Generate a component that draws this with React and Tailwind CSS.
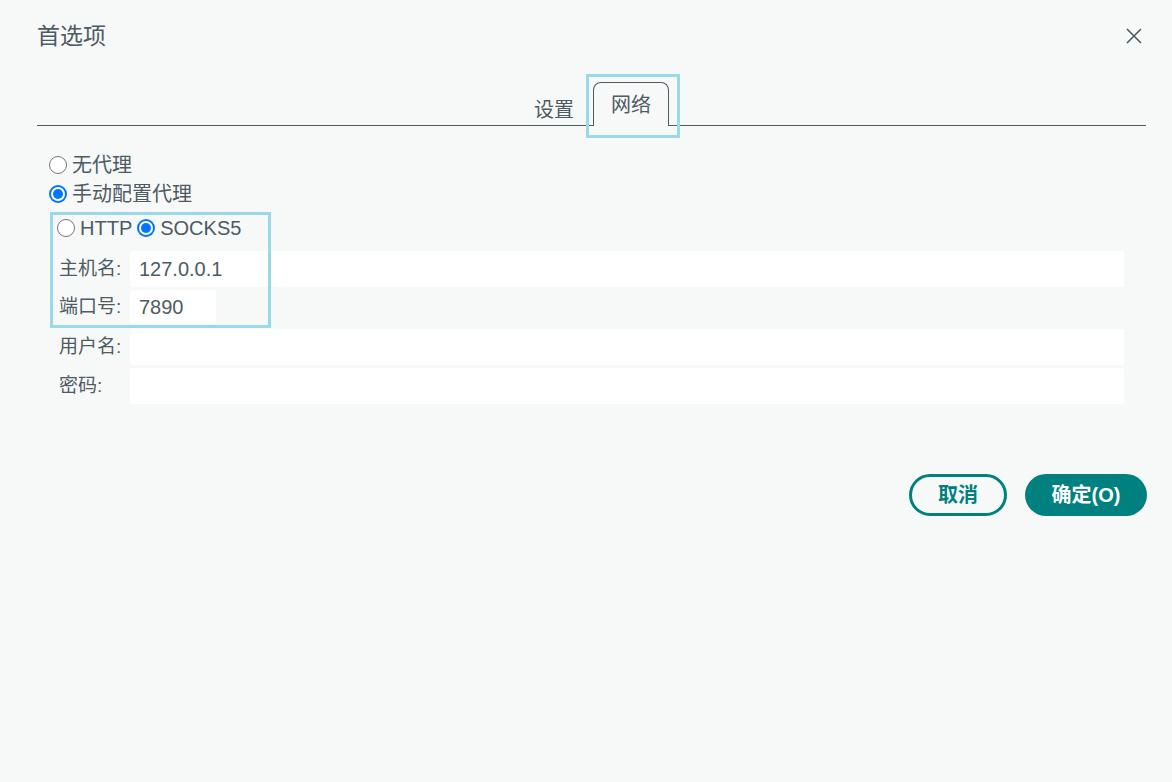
import React, { useState } from 'react';

const font = { fontFamily: '"Liberation Sans", "Noto Sans CJK SC", sans-serif' };

const Radio = ({ checked, label, onClick, className = '' }) => (
  <button type="button" onClick={onClick} className={`flex items-center gap-[5px] text-[20px] leading-[24px] text-[#4d5b63] ${className}`}>
    {checked ? (
      <span className="flex h-[18px] w-[18px] items-center justify-center rounded-full bg-[#0075ff]">
        <span className="flex h-[14px] w-[14px] items-center justify-center rounded-full bg-white">
          <span className="h-[10px] w-[10px] rounded-full bg-[#0075ff]" />
        </span>
      </span>
    ) : (
      <span className="h-[18px] w-[18px] rounded-full border-[1.5px] border-[#767676] bg-white" />
    )}
    <span>{label}</span>
  </button>
);

const Field = ({ label, value, inputClass = 'w-[994px] h-[36px]' }) => (
  <div className="flex items-center">
    <span className="w-[73px] pl-[2px] text-[19px] leading-[24px] text-[#4d5b63]">{label}</span>
    <div className={`flex items-center rounded-[3px] bg-white pl-[9px] text-[20px] leading-[24px] text-[#4d5b63] ${inputClass}`}>
      {value}
    </div>
  </div>
);

export default function App() {
  const [proxy, setProxy] = useState('manual');
  const [proto, setProto] = useState('socks5');

  return (
    <div className="h-[782px] w-[1172px] bg-[#f7f9f9]" style={font}>
      {/* header */}
      <div className="flex items-center justify-between pl-[37px] pr-[29px] pt-[19px]">
        <h1 className="text-[23px] leading-[34px] text-[#4d5b63]">首选项</h1>
        <svg width="18" height="18" viewBox="0 0 18 18" className="text-[#4d5b63]">
          <path d="M2 2L16 16M16 2L2 16" stroke="currentColor" strokeWidth="1.6" />
        </svg>
      </div>

      {/* tabs */}
      <div className="ml-[37px] mr-[26px] mt-[20px] flex h-[53px] items-end border-b border-[#4d5b63] pl-[497px]">
        <div className="mb-[5px] mr-[19px] text-[20px] leading-none text-[#4d5b63]">设置</div>
        <div className="relative -mb-px flex h-[44px] w-[76px] items-center justify-center rounded-t-[8px] border border-b-0 border-[#4d5b63] bg-[#f7f9f9] text-[20px] text-[#4d5b63]">
          网络
          <span className="absolute -bottom-[12px] -left-[8px] -right-[12px] -top-[9px] border-[3px] border-[#99d9ea]" />
        </div>
      </div>

      {/* proxy options */}
      <div className="pl-[49px] pt-[27px]">
        <Radio checked={proxy === 'none'} label="无代理" onClick={() => setProxy('none')} />
        <Radio checked={proxy === 'manual'} label="手动配置代理" onClick={() => setProxy('manual')} className="mt-[5px]" />
      </div>

      <div className="relative mt-[4px] pl-[57px]">
        <span className="absolute left-[50px] top-[2px] h-[116px] w-[221px] border-[3px] border-[#99d9ea]" />
        <div className="flex h-[30px] items-end gap-[5px]">
          <Radio checked={proto === 'http'} label="HTTP" onClick={() => setProto('http')} />
          <Radio checked={proto === 'socks5'} label="SOCKS5" onClick={() => setProto('socks5')} />
        </div>
      </div>

      <div className="mt-[11px] flex flex-col gap-[3px] pl-[57px]">
        <Field label="主机名:" value="127.0.0.1" />
        <Field label="端口号:" value="7890" inputClass="w-[86px] h-[33px]" />
        <div className="mt-[3px]">
          <Field label="用户名:" value="" />
        </div>
        <Field label="密码:" value="" />
      </div>

      {/* actions */}
      <div className="mt-[70px] flex justify-end gap-[18px] pr-[25px]">
        <button className="flex h-[42px] w-[98px] items-center justify-center rounded-full border-[3px] border-[#00807f] text-[20px] font-bold text-[#00807f]">
          取消
        </button>
        <button className="flex h-[42px] w-[122px] items-center justify-center rounded-full bg-[#00807f] text-[20px] font-bold text-white">
          确定(O)
        </button>
      </div>
    </div>
  );
}
